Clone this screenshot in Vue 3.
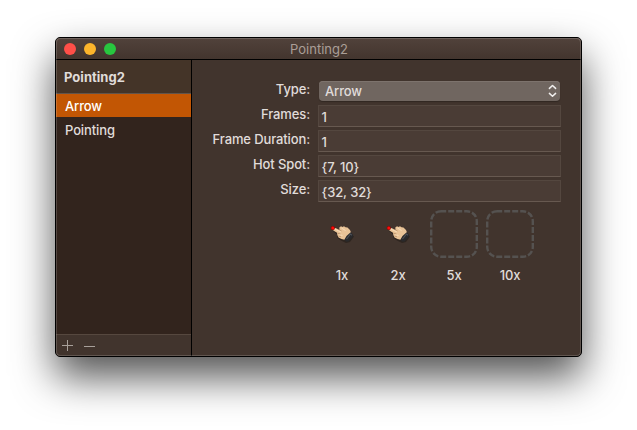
<script setup>
const fields = [
  { label: 'Frames:', value: '1' },
  { label: 'Frame Duration:', value: '1' },
  { label: 'Hot Spot:', value: '{7, 10}' },
  { label: 'Size:', value: '{32, 32}' },
]
const scales = [
  { name: '1x', filled: true },
  { name: '2x', filled: true },
  { name: '5x', filled: false },
  { name: '10x', filled: false },
]
</script>

<template>
  <main class="desktop">
    <section class="window">
      <header class="titlebar">
        <div class="lights"><i class="red"></i><i class="yellow"></i><i class="green"></i></div>
        <span class="title">Pointing2</span>
      </header>
      <div class="body">
        <aside class="sidebar">
          <div class="group">Pointing2</div>
          <ul class="list">
            <li class="item selected">Arrow</li>
            <li class="item">Pointing</li>
          </ul>
          <footer class="tools">
            <svg width="44" height="21" viewBox="0 0 44 21" fill="none" stroke="#a8a09a" stroke-width="1">
              <path d="M6 10.5h11M11.5 5v11M28 11.5h11" />
            </svg>
          </footer>
        </aside>
        <div class="content">
          <div class="row type">
            <label class="label">Type:</label>
            <div class="popup">
              <span>Arrow</span>
              <svg class="chevrons" width="9" height="14" viewBox="0 0 9 14" fill="none" stroke="#f1efee" stroke-width="1.5" stroke-linecap="round" stroke-linejoin="round">
                <path d="M1.4 4.4 4.5 1.5 7.6 4.4M1.4 9.4 4.5 12.3 7.6 9.4" />
              </svg>
            </div>
          </div>
          <div v-for="f in fields" :key="f.label" class="row">
            <label class="label">{{ f.label }}</label>
            <div class="field">{{ f.value }}</div>
          </div>
          <div class="scales">
            <div v-for="s in scales" :key="s.name" class="scale">
              <svg v-if="s.filled" class="well" width="48" height="48" viewBox="0 0 48 48">
                <path d="M15 21 19 24.5 19.5 28 23 30.5 28 33 32 32 36 26.5 30 22Z" fill="#1c1512" opacity=".5" />
                <path d="M15.5 18.3 17.5 18 21.5 20 21.3 17.6 23 16.3 24.5 17 26 16.2 27.5 17.3 29.5 17.6 32 20 33 22.5 27.5 30 23.5 29 20.5 27.5 19.3 25 19 22.8 15.3 20.6Z" fill="#e9c397" />
                <path d="M17 19.2 23 22M23.500 18 27.500 20.500M21 24.500 24.500 25.500" stroke="#f8dcb8" stroke-width="1" fill="none" />
                <path d="M21.500 20 23.500 20.800M19.500 23.200 22.500 24M20.500 26.200 23 26.700" stroke="#a98059" stroke-width=".6" fill="none" />
                <path d="M26.3 29.8 28.5 26 32.7 22.2 35.2 24.8 34.700 27 30.500 31.500 28.300 31.700Z" fill="#29292b" />
                <path d="M28.500 29 32.500 24 34 25.200" stroke="#4c4f55" stroke-width="1.200" fill="none" />
                <circle cx="14.800" cy="18" r="2.100" fill="#8a0806" />
                <circle cx="14.800" cy="18" r="1.500" fill="#ff0b08" />
              </svg>
              <svg v-else class="well" width="48" height="48" viewBox="0 0 48 48" fill="none">
                <rect x="1.2" y="1.2" width="45.6" height="45.6" rx="10" stroke="#555250" stroke-width="2.4" stroke-dasharray="6 2" stroke-dashoffset="1" />
              </svg>
              <span>{{ s.name }}</span>
            </div>
          </div>
        </div>
      </div>
    </section>
  </main>
</template>

<style>
body {
  background: #fff;
}
</style>

<style scoped>
.desktop {
  width: 637px;
  height: 430px;
  box-sizing: border-box;
  padding: 37px 0 0 55px;
  overflow: hidden;
  background: #fff;
  font: 500 13px/16px Inter, "Liberation Sans", sans-serif;
  letter-spacing: -0.12px;
  color: #e0dcda;
}
.window {
  position: relative;
  width: 527px;
  height: 320px;
  box-sizing: border-box;
  border: 1px solid #000;
  border-radius: 5px;
  background: #41342d;
  display: flex;
  flex-direction: column;
  box-shadow: 0 20px 40px rgba(0, 0, 0, 0.68);
}
.window::after {
  content: "";
  position: absolute;
  inset: 0;
  border: 1px solid rgba(255, 255, 255, 0.17);
  border-radius: 4px;
  pointer-events: none;
}
.titlebar {
  height: 22px;
  box-sizing: border-box;
  flex: none;
  display: grid;
  grid-template-columns: 80px 1fr 80px;
  align-items: center;
  border-bottom: 1px solid #000;
  border-radius: 4px 4px 0 0;
  background: linear-gradient(#51423b, #43352e);
}
.lights {
  display: flex;
  gap: 8px;
  padding-left: 8px;
}
.lights i {
  width: 12px;
  height: 12px;
  border-radius: 50%;
}
.red { background: #ff4f48; }
.yellow { background: #fdb52b; }
.green { background: #28c63f; }
.title {
  text-align: center;
  font-weight: 400;
  color: #aa9e97;
  letter-spacing: 0;
  padding: 1px 0 0 1px;
}
.body {
  flex: 1;
  display: flex;
  min-height: 0;
}
.sidebar {
  width: 136px;
  box-sizing: border-box;
  border-right: 1px solid #000;
  border-radius: 0 0 0 4px;
  overflow: hidden;
  display: flex;
  flex-direction: column;
}
.group {
  height: 34px;
  box-sizing: border-box;
  border-bottom: 1px solid #62544b;
  padding: 9px 0 0 8px;
  font-weight: 700;
  letter-spacing: 0.03px;
  background: #443428;
}
.list {
  flex: 1;
  margin: 0;
  padding: 0;
  list-style: none;
  background: #32241d;
}
.item {
  height: 24px;
  line-height: 27px;
  padding-left: 9px;
}
.selected {
  height: 23px;
  line-height: 25px;
  background: #c25604;
  color: #fff;
}
.tools {
  height: 22px;
  box-sizing: border-box;
  border-top: 1px solid #56483f;
  background: #41342d;
}
.tools svg {
  display: block;
}
.content {
  flex: 1;
  padding-top: 20px;
}
.row {
  display: grid;
  grid-template-columns: 118px 243px;
  column-gap: 8px;
  height: 25px;
}
.label {
  text-align: right;
  padding-top: 1px;
  white-space: nowrap;
}
.popup {
  margin: 1px 1px 0;
  height: 20px;
  box-sizing: border-box;
  border-radius: 4px;
  padding: 0 3px 0 6px;
  display: flex;
  justify-content: space-between;
  align-items: center;
  background: #706660;
  box-shadow: inset 0 1px #7d736d, 0 1px 1px rgba(0, 0, 0, 0.25);
}
.field {
  height: 22px;
  box-sizing: border-box;
  border: 1px solid #54473f;
  border-bottom-color: #675950;
  background: #4a3c35;
  padding: 3px 0 0 2.6px;
}
.scales {
  display: flex;
  gap: 8px;
  padding: 5px 0 0 126px;
}
.scale {
  width: 48px;
  display: flex;
  flex-direction: column;
  align-items: center;
  gap: 9px;
}
.well {
  display: block;
}
</style>
